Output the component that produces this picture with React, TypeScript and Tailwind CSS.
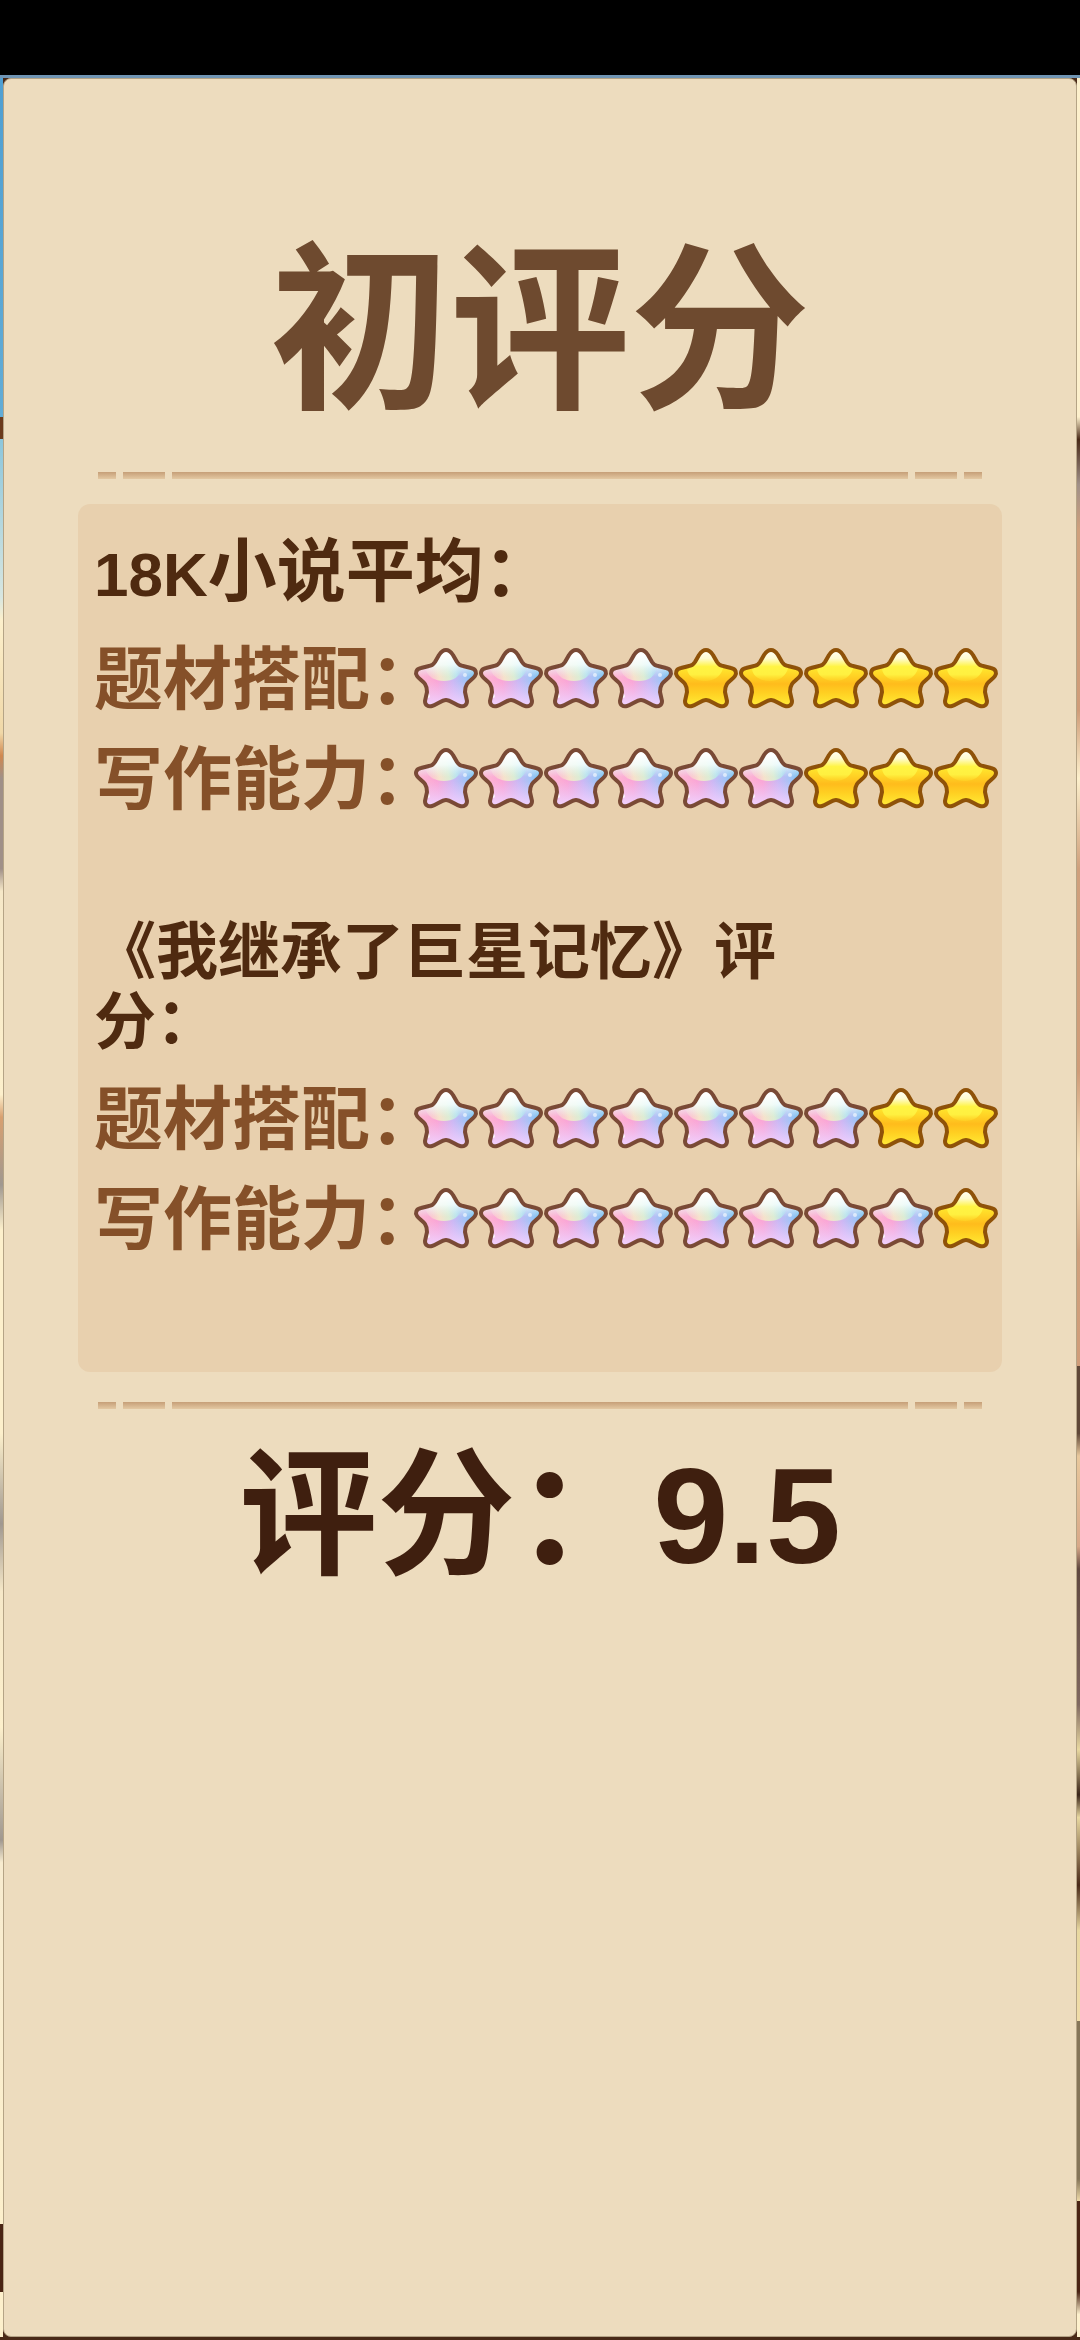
type StarKind = 'crystal' | 'gold';

const MAX_STARS = 9;

const sections = [
  {
    title: (
      <h2 className="pb-3 text-[69px] leading-[100px] font-bold text-[#4f2a10]">
        <span className="font-['Liberation_Sans',sans-serif] text-[62px] leading-none">18K</span>
        小说平均：
      </h2>
    ),
    rows: [
      { label: '题材搭配：', crystal: 4 },
      { label: '写作能力：', crystal: 6 },
    ],
  },
  {
    title: (
      <h2 className="mt-21 max-w-[720px] pb-4 text-[62px] leading-[70px] font-bold text-[#4f2a10]">
        《我继承了巨星记忆》评分：
      </h2>
    ),
    rows: [
      { label: '题材搭配：', crystal: 7 },
      { label: '写作能力：', crystal: 8 },
    ],
  },
];

const STAR_PATH =
  'M31 2C34 2 36 4 38 7L42 14C44 17 45 18 48 18L56 20C61 21 62 25 60 28C58 31 54 33 52 36C50 39 50 41 50 44L52 53C52 57 49 59 45 58C41 57 35 52 31 52C27 52 21 57 17 58C13 59 10 57 10 53L12 44C12 41 12 39 10 36C8 33 4 31 2 28C0 25 1 21 6 20L14 18C17 18 18 17 20 14L24 7C26 4 28 2 31 2Z';

// Gradients shared by every star on the page
function StarDefs() {
  return (
    <svg className="absolute h-0 w-0" aria-hidden="true">
      <defs>
        <clipPath id="star-clip">
          <path d={STAR_PATH} />
        </clipPath>
        <linearGradient id="gold-base" x1="0" y1="0" x2="0" y2="1">
          <stop offset="0" stopColor="#fff6a8" />
          <stop offset="0.35" stopColor="#ffe42c" />
          <stop offset="0.6" stopColor="#ffbc1c" />
          <stop offset="0.75" stopColor="#ffd022" />
          <stop offset="1" stopColor="#fff03a" />
        </linearGradient>
        <linearGradient id="gold-shine" x1="0" y1="0" x2="0" y2="1">
          <stop offset="0" stopColor="#ffffff" />
          <stop offset="0.3" stopColor="#fffbd0" />
          <stop offset="0.55" stopColor="#fff444" />
          <stop offset="0.8" stopColor="#fff040" />
          <stop offset="1" stopColor="#ffd828" stopOpacity="0.5" />
        </linearGradient>
        <linearGradient id="crystal-base" x1="0" y1="0.5" x2="1" y2="0.4">
          <stop offset="0" stopColor="#ffbcd2" />
          <stop offset="0.35" stopColor="#faa6d6" />
          <stop offset="0.6" stopColor="#ccb8f4" />
          <stop offset="0.8" stopColor="#a4c4f6" />
          <stop offset="1" stopColor="#6cc0f0" />
        </linearGradient>
        <linearGradient id="crystal-bottom" x1="0" y1="0" x2="0" y2="1">
          <stop offset="0.55" stopColor="#ecccfc" stopOpacity="0" />
          <stop offset="0.95" stopColor="#f0d0fe" />
        </linearGradient>
        <linearGradient id="crystal-shine" gradientUnits="userSpaceOnUse" x1="10" y1="28" x2="48" y2="20">
          <stop offset="0" stopColor="#ffc8d4" stopOpacity="0.5" />
          <stop offset="0.35" stopColor="#f6e2cc" />
          <stop offset="0.6" stopColor="#dcecd4" />
          <stop offset="0.8" stopColor="#b8e2ee" />
          <stop offset="1" stopColor="#90cef0" stopOpacity="0.4" />
        </linearGradient>
        <linearGradient id="crystal-tip" x1="0" y1="0" x2="0" y2="1">
          <stop offset="0.12" stopColor="#ffffff" />
          <stop offset="0.28" stopColor="#f6ffff" stopOpacity="0.8" />
          <stop offset="0.48" stopColor="#e0f6f4" stopOpacity="0" />
        </linearGradient>
      </defs>
    </svg>
  );
}

function Star({ kind }: { kind: StarKind }) {
  const gold = kind === 'gold';
  return (
    <svg viewBox="0 0 65 60" className="h-[60px] w-[65px] shrink-0 overflow-visible" aria-hidden="true">
      {gold ? (
        <g clipPath="url(#star-clip)">
          <rect width="62" height="60" fill="url(#gold-base)" />
          <path
            d="M31 1C39 6 44 15 48 20C46 29 38 33 30 33C21 33 13 29 12 21C19 17 23 6 31 1Z"
            fill="url(#gold-shine)"
          />
        </g>
      ) : (
        <g clipPath="url(#star-clip)">
          <rect width="62" height="60" fill="url(#crystal-base)" />
          <rect width="62" height="60" fill="url(#crystal-bottom)" />
          <path
            d="M31 1C39 6 44 15 47 20C45 29 38 33 29 33C20 33 13 29 11 22C19 17 23 6 31 1Z"
            fill="url(#crystal-shine)"
          />
          <rect width="62" height="60" fill="url(#crystal-tip)" />
          <circle cx="50" cy="27" r="2" fill="#ffffff" fillOpacity="0.6" />
          <circle cx="13" cy="48" r="2" fill="#ffffff" fillOpacity="0.8" />
        </g>
      )}
      <path d={STAR_PATH} fill="none" stroke={gold ? '#8f5209' : '#7a4a36'} strokeWidth="4" strokeLinejoin="round" />
    </svg>
  );
}

function Divider() {
  return (
    <div className="mx-5 flex h-[7px] gap-[7px] *:bg-linear-to-b *:from-[#c69f78] *:to-[#e3c8a2]">
      <span className="w-[18px]" />
      <span className="w-[42px]" />
      <span className="flex-1" />
      <span className="w-[42px]" />
      <span className="w-[18px]" />
    </div>
  );
}

function RatingRow({ label, crystal }: { label: string; crystal: number }) {
  return (
    <div className="flex h-[100px] items-center">
      <span className="w-[321px] shrink-0 pb-2 text-[69px] leading-[92px] font-bold whitespace-nowrap text-[#855029]">
        {label}
      </span>
      <div className="flex" role="img" aria-label={`${crystal} / ${MAX_STARS}`}>
        {Array.from({ length: MAX_STARS }, (_, i) => (
          <Star key={i} kind={i < crystal ? 'crystal' : 'gold'} />
        ))}
      </div>
    </div>
  );
}

export default function App() {
  return (
    <div className="flex min-h-screen flex-col bg-[#4a2a18] font-['Noto_Sans_CJK_SC',sans-serif]">
      <StarDefs />
      <div className="h-[75px] bg-black" />
      <div className="h-[3px] bg-[#7095b4]" />

      <div className="flex flex-1 pb-[3px]">
        {/* Slivers of the scene behind the card */}
        <div className="w-[3px] bg-[linear-gradient(to_bottom,#4f9fd2_0%,#62acd6_15%,#6b3a1c_15%,#6b3a1c_16%,#8cc6dc_16%,#d8e6e0_23%,#fdf0cc_24%,#f0d8a8_29%,#d08850_30%,#a09088_31%,#a09088_35%,#f6e8c8_36%,#fdf0cc_45%,#d8a070_46%,#a09890_49%,#fdf0cc_51%,#fdf0cc_60%,#a09890_64%,#f6e8c8_67%,#fdf0cc_73%,#a09890_78%,#f8ecd0_79%,#fdf0cc_95%,#4a2414_95%,#4a2414_98%,#fdf0cc_98%)]" />

        <main className="flex-1 rounded-lg border border-[#b5a486] bg-[#eddcbe] px-[74px]">
          <h1 className="pt-[137px] text-center text-[180px] leading-[200px] font-bold text-[#6e4a2f]">初评分</h1>

          <div className="mt-14">
            <Divider />
          </div>

          <section className="mt-[25px] mb-[30px] rounded-xl bg-[#e8d0ae] pt-3 pb-[104px] pl-4">
            {sections.map((section, i) => (
              <div key={i}>
                {section.title}
                {section.rows.map((row) => (
                  <RatingRow key={row.label} label={row.label} crystal={row.crystal} />
                ))}
              </div>
            ))}
          </section>

          <Divider />

          <p className="mt-4 text-center text-[138px] leading-[156px] font-bold text-[#3f1f0f]">
            评分：<span className="font-['Liberation_Sans',sans-serif] text-[135px] leading-none">9.5</span>
          </p>
        </main>

        <div className="w-[3px] bg-[linear-gradient(to_bottom,#fdf0cc_0%,#fdf0cc_15%,#4a2a18_16%,#a09088_18%,#cfa07c_20%,#cf9c78_28%,#fdf0cc_31%,#cfa07c_35%,#cf9c78_44%,#f6e0b8_48%,#cfa07c_52%,#cf9c78_57%,#604838_57%,#604838_60%,#e8c89c_61%,#d8a888_65%,#604840_66%,#806860_72%,#e8d8a0_74%,#3a2418_76%,#e8d8a0_77%,#4a2a18_80%,#e8d8a0_82%,#f0dca8_86%,#857558_86%,#857558_93%,#f0dca8_94%,#4a2414_94%,#4a2414_98%,#fdf0cc_99%)]" />
      </div>
    </div>
  );
}
